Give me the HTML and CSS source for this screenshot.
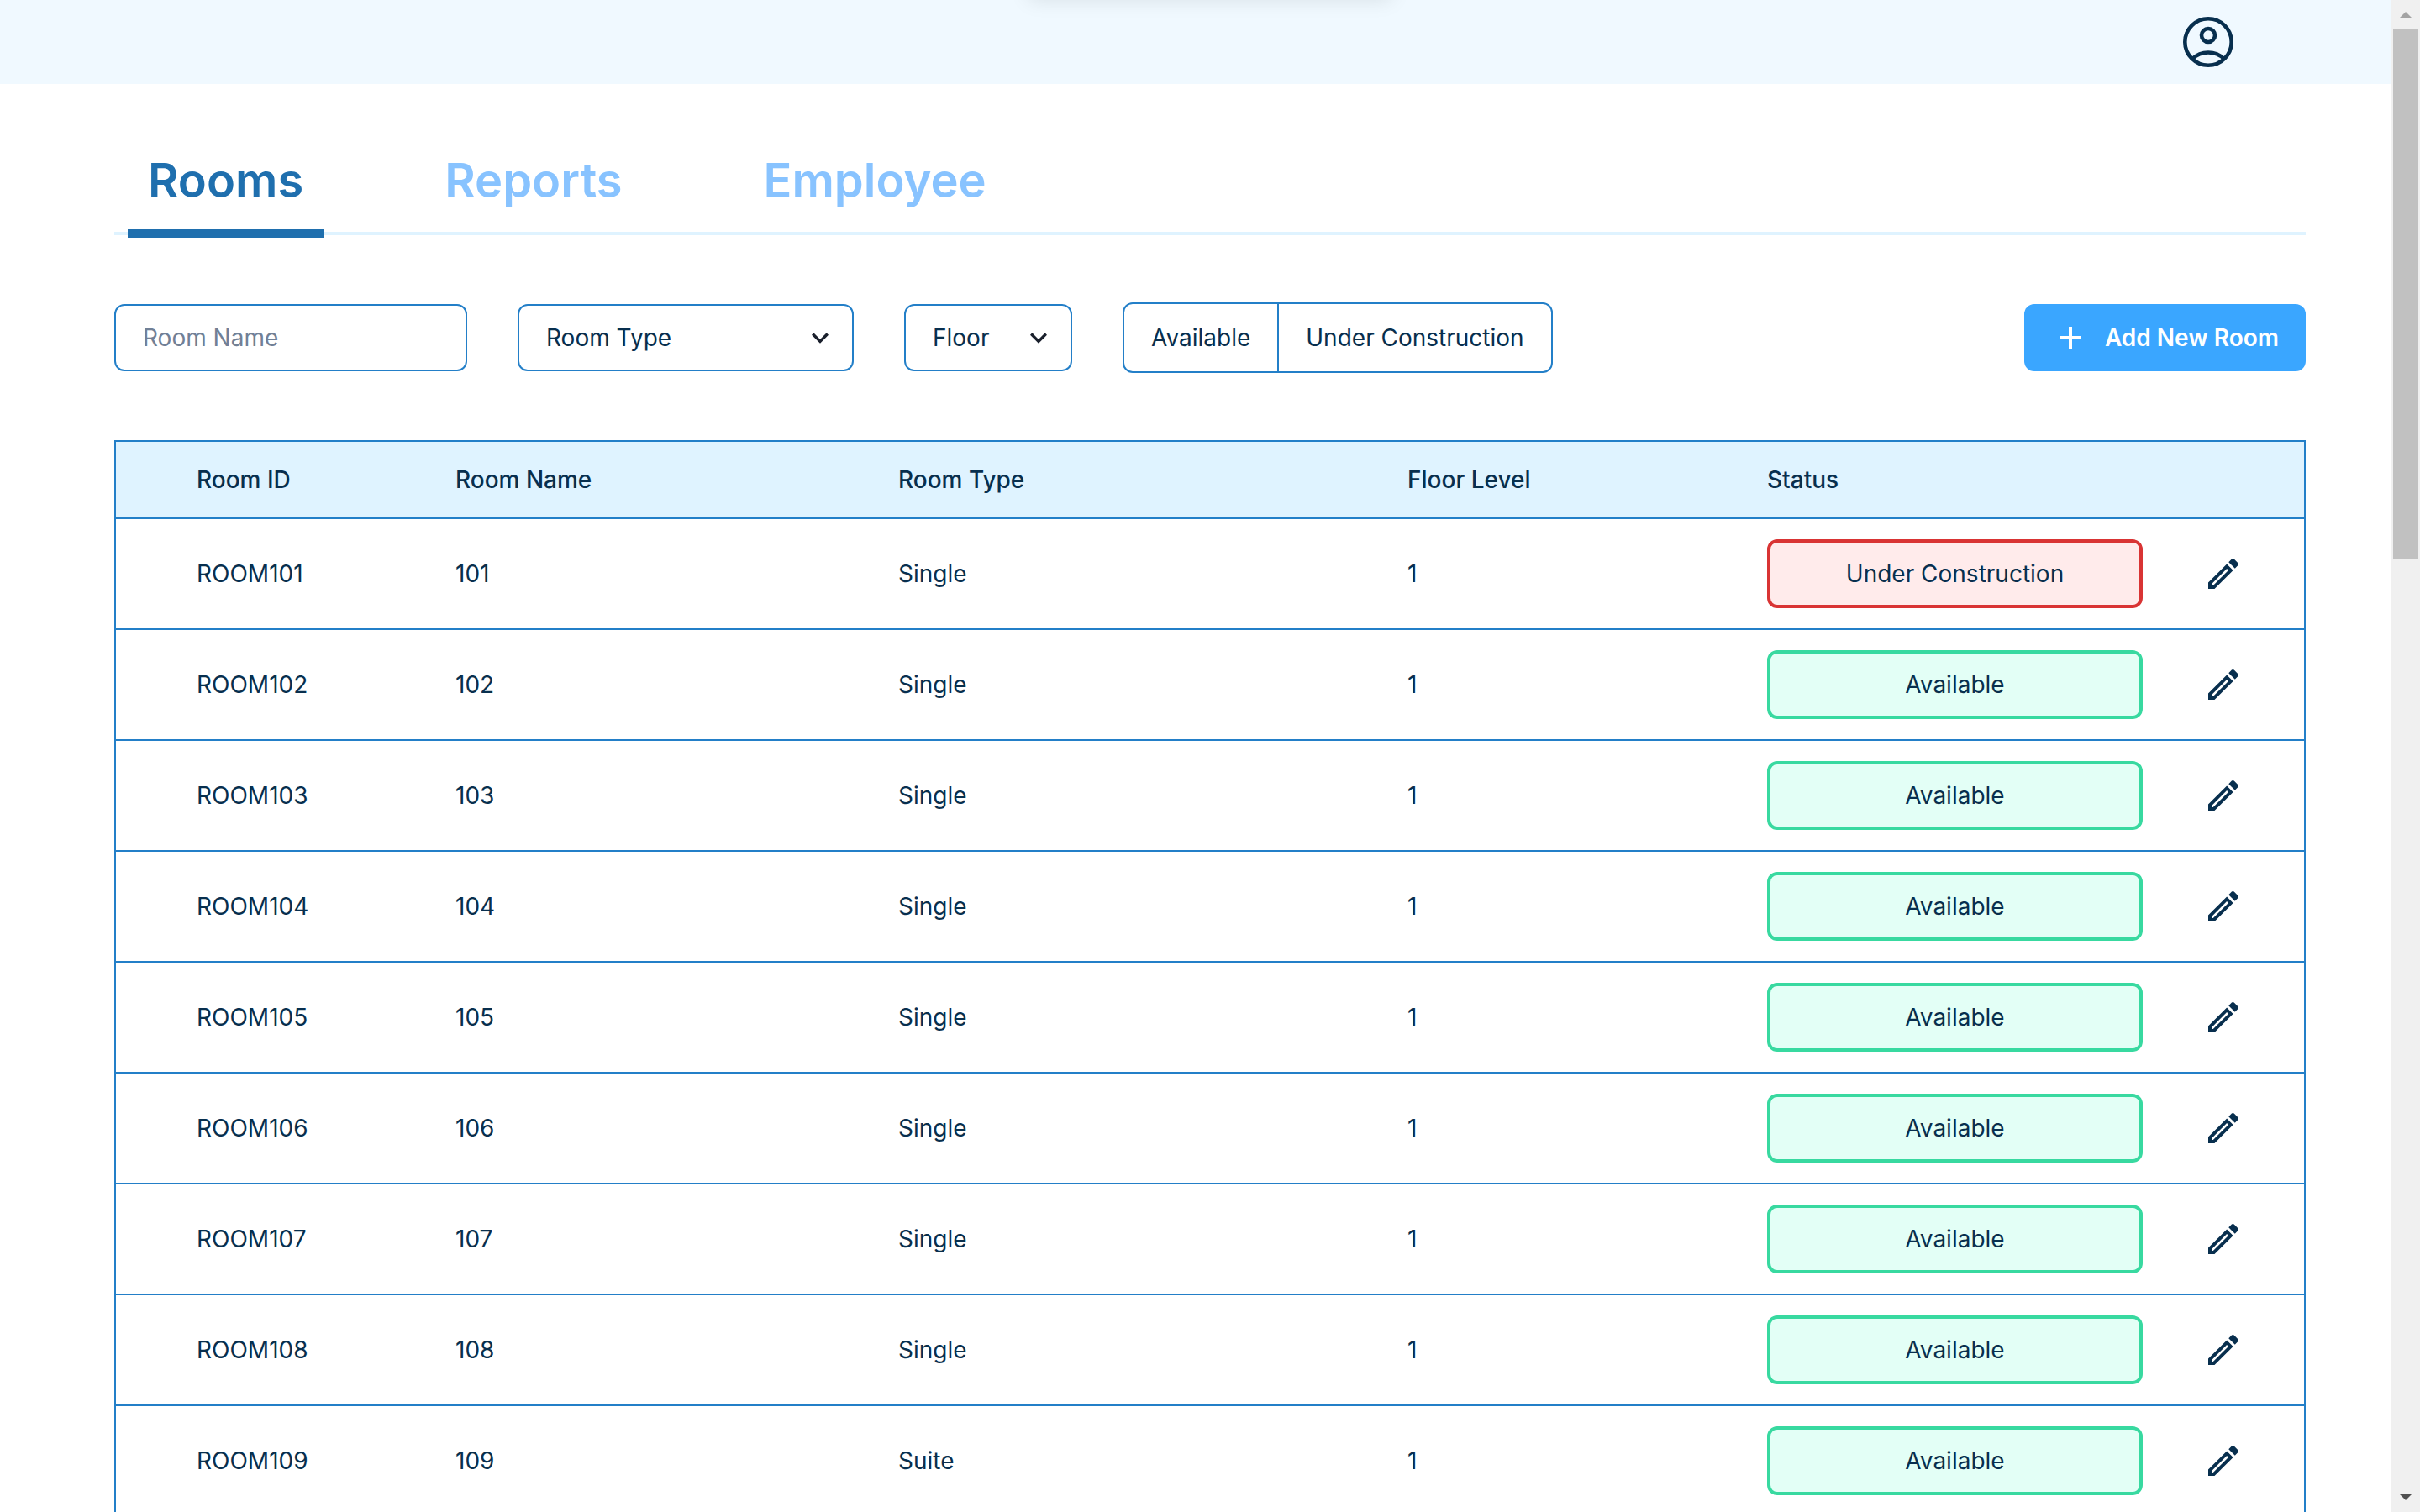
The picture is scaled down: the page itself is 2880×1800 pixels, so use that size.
FILE: index.html
```html
<!DOCTYPE html>
<html lang="en">
<head>
<meta charset="utf-8">
<meta name="viewport" content="width=device-width, initial-scale=1">
<title>Rooms</title>
<link rel="stylesheet" href="styles.css">
</head>
<body>
<svg class="sprite" aria-hidden="true">
  <symbol id="pencil" viewBox="0 0 24 24"><path d="M3 17.25V21h3.75L17.81 9.94l-3.75-3.75L3 17.25zM5.92 19H5v-.92l9.06-9.06.92.92L5.92 19zM20.71 5.63l-2.34-2.34c-.2-.2-.45-.29-.71-.29s-.51.1-.7.29l-1.83 1.83 3.75 3.75 1.83-1.83c.39-.39.39-1.02 0-1.41z"/></symbol>
  <symbol id="chevron" viewBox="0 0 24 24"><path d="M16.59 8.59L12 13.17 7.41 8.59 6 10l6 6 6-6z"/></symbol>
</svg>
<div class="notice"></div>
<div class="app">
  <div class="page">
    <header class="topbar">
      <button class="account" type="button" aria-label="Account">
        <svg viewBox="0 0 60 60" fill="none" stroke="currentColor" stroke-width="4.6"><circle cx="30" cy="30" r="27.7"/><circle cx="30" cy="22" r="8"/><path d="M11 50.2A27.3 27.3 0 0 1 49 50.2"/></svg>
      </button>
    </header>
    <main class="content">
      <nav class="tabs">
        <a class="tab tab-active" href="#rooms">Rooms</a>
        <a class="tab" href="#reports">Reports</a>
        <a class="tab" href="#employee">Employee</a>
      </nav>
      <div class="toolbar">
        <input class="field field-name" type="text" placeholder="Room Name" aria-label="Room Name">
        <div class="picker picker-type">
          <select class="field" aria-label="Room Type"><option>Room Type</option><option>Single</option><option>Suite</option></select>
          <svg class="chevron"><use href="#chevron"/></svg>
        </div>
        <div class="picker picker-floor">
          <select class="field" aria-label="Floor"><option>Floor</option><option>1</option></select>
          <svg class="chevron"><use href="#chevron"/></svg>
        </div>
        <div class="segments">
          <button class="segment" type="button">Available</button>
          <button class="segment" type="button">Under Construction</button>
        </div>
        <button class="add" type="button">
          <svg class="plus" viewBox="0 0 26 26"><path d="M11 0h4v11h11v4H15v11h-4V15H0v-4h11z"/></svg>
          Add New Room
        </button>
      </div>
      <table class="rooms">
        <colgroup><col class="col-id"><col class="col-name"><col class="col-type"><col class="col-floor"><col class="col-status"><col class="col-edit"></colgroup>
        <thead><tr><th>Room ID</th><th>Room Name</th><th>Room Type</th><th>Floor Level</th><th>Status</th><th></th></tr></thead>
        <tbody>
          <tr><td>ROOM101</td><td>101</td><td>Single</td><td>1</td><td><div class="status status-busy">Under Construction</div></td><td><button class="edit" type="button" aria-label="Edit room 101"><svg><use href="#pencil"/></svg></button></td></tr>
          <tr><td>ROOM102</td><td>102</td><td>Single</td><td>1</td><td><div class="status">Available</div></td><td><button class="edit" type="button" aria-label="Edit room 102"><svg><use href="#pencil"/></svg></button></td></tr>
          <tr><td>ROOM103</td><td>103</td><td>Single</td><td>1</td><td><div class="status">Available</div></td><td><button class="edit" type="button" aria-label="Edit room 103"><svg><use href="#pencil"/></svg></button></td></tr>
          <tr><td>ROOM104</td><td>104</td><td>Single</td><td>1</td><td><div class="status">Available</div></td><td><button class="edit" type="button" aria-label="Edit room 104"><svg><use href="#pencil"/></svg></button></td></tr>
          <tr><td>ROOM105</td><td>105</td><td>Single</td><td>1</td><td><div class="status">Available</div></td><td><button class="edit" type="button" aria-label="Edit room 105"><svg><use href="#pencil"/></svg></button></td></tr>
          <tr><td>ROOM106</td><td>106</td><td>Single</td><td>1</td><td><div class="status">Available</div></td><td><button class="edit" type="button" aria-label="Edit room 106"><svg><use href="#pencil"/></svg></button></td></tr>
          <tr><td>ROOM107</td><td>107</td><td>Single</td><td>1</td><td><div class="status">Available</div></td><td><button class="edit" type="button" aria-label="Edit room 107"><svg><use href="#pencil"/></svg></button></td></tr>
          <tr><td>ROOM108</td><td>108</td><td>Single</td><td>1</td><td><div class="status">Available</div></td><td><button class="edit" type="button" aria-label="Edit room 108"><svg><use href="#pencil"/></svg></button></td></tr>
          <tr><td>ROOM109</td><td>109</td><td>Suite</td><td>1</td><td><div class="status">Available</div></td><td><button class="edit" type="button" aria-label="Edit room 109"><svg><use href="#pencil"/></svg></button></td></tr>
        </tbody>
      </table>
    </main>
  </div>
  <div class="scrollbar" aria-hidden="true">
    <svg class="arrow arrow-up" viewBox="0 0 16 8"><path d="M8 0l8 8H0z"/></svg>
    <div class="track"><div class="thumb"></div></div>
    <svg class="arrow" viewBox="0 0 16 8"><path d="M0 0h16L8 8z"/></svg>
  </div>
</div>
</body>
</html>
```
FILE: styles.css
```css
:root {
  --ink: #082f4e;
  --line: #237fc8;
  --sky: #dff3ff;
}

* { box-sizing: border-box; }

body {
  margin: 0;
  background: #fff;
  color: var(--ink);
  font: 400 28px/40px Inter, sans-serif;
}

button, input, select { font: inherit; color: inherit; margin: 0; }
button { border: 0; background: none; padding: 0; cursor: pointer; }
svg { display: block; fill: currentColor; }

.sprite { position: absolute; width: 0; height: 0; }

/* Notice parked above the window edge; only its shadow falls on the page. */
.notice {
  position: fixed;
  left: 50%;
  bottom: 100%;
  width: 440px;
  height: 80px;
  margin-left: -220px;
  box-shadow: 0 4px 24px -4px rgba(0, 0, 0, .1);
}

.app { display: flex; height: 100vh; overflow: hidden; }
.page { flex: 1; min-width: 0; overflow: hidden; }

.topbar {
  display: flex;
  justify-content: flex-end;
  align-items: center;
  height: 100px;
  padding: 0 188px;
  background: #f0f9ff;
}

.account svg { width: 60px; height: 60px; fill: none; }

.content { padding: 72px 102px 0 136px; }

.tabs {
  display: flex;
  gap: 120px;
  height: 108px;
  padding: 0 16px;
  border-bottom: 4px solid var(--sky);
}

.tab {
  height: 111px;
  padding: 8px 24px 0;
  color: #88c3ff;
  font-size: 56px;
  font-weight: 600;
  line-height: 70px;
  text-decoration: none;
}

.tab-active { color: #1f6fae; border-bottom: 10px solid; }

.toolbar { display: flex; align-items: center; gap: 60px; margin-top: 80px; }

.field {
  width: 100%;
  height: 80px;
  padding: 0 32px;
  border: 2px solid var(--line);
  border-radius: 12px;
  background: #fff;
  appearance: none;
}

.field::placeholder { color: #718096; opacity: 1; }
.field-name { width: 420px; }

.picker { display: grid; align-items: center; }
.picker > * { grid-area: 1 / 1; }
.picker-type { width: 400px; }
.picker-floor { width: 200px; }

.chevron {
  width: 40px;
  height: 40px;
  margin-right: 20px;
  justify-self: end;
  color: #1a202c;
  pointer-events: none;
}

.segments { display: flex; border: 2px solid var(--line); border-radius: 12px; }
.segment { height: 80px; padding: 0 32px; }
.segment + .segment { border-left: 2px solid var(--line); }

.add {
  display: flex;
  align-items: center;
  gap: 28px;
  height: 80px;
  margin-left: auto;
  padding: 0 32px 0 42px;
  border-radius: 12px;
  background: #3aa6ff;
  color: #fff;
  font-weight: 600;
}

.plus { width: 26px; height: 26px; }

.rooms {
  width: 100%;
  margin-top: 80px;
  border: 2px solid var(--line);
  border-spacing: 0;
  table-layout: fixed;
}

.col-id { width: 404px; }
.col-name { width: 527px; }
.col-type { width: 606px; }
.col-floor { width: 428px; }
.col-status { width: 447px; }
.col-edit { width: 192px; }

th, td { padding: 0; border-bottom: 2px solid var(--line); text-align: left; }
th { height: 92px; background: var(--sky); font-weight: 500; }
td { height: 132px; }
th:first-child, td:first-child { padding-left: 96px; }

.status {
  padding: 17px 0;
  border: 4px solid #38d9a0;
  border-radius: 12px;
  background: #e3fff6;
  text-align: center;
}

.status-busy { border-color: #d93434; background: #ffebeb; }

.edit { display: block; margin: 0 auto; }
.edit svg { width: 48px; height: 48px; }

.scrollbar {
  display: flex;
  flex-direction: column;
  align-items: center;
  width: 34px;
  padding: 14px 0;
  background: #f0f0f0;
  color: #505050;
}

.arrow { width: 16px; height: 8px; }
.arrow-up { color: #a3a3a3; }
.track { flex: 1; padding: 12px 0; }
.thumb { width: 30px; height: 36.5%; background: #c1c1c1; }
```
